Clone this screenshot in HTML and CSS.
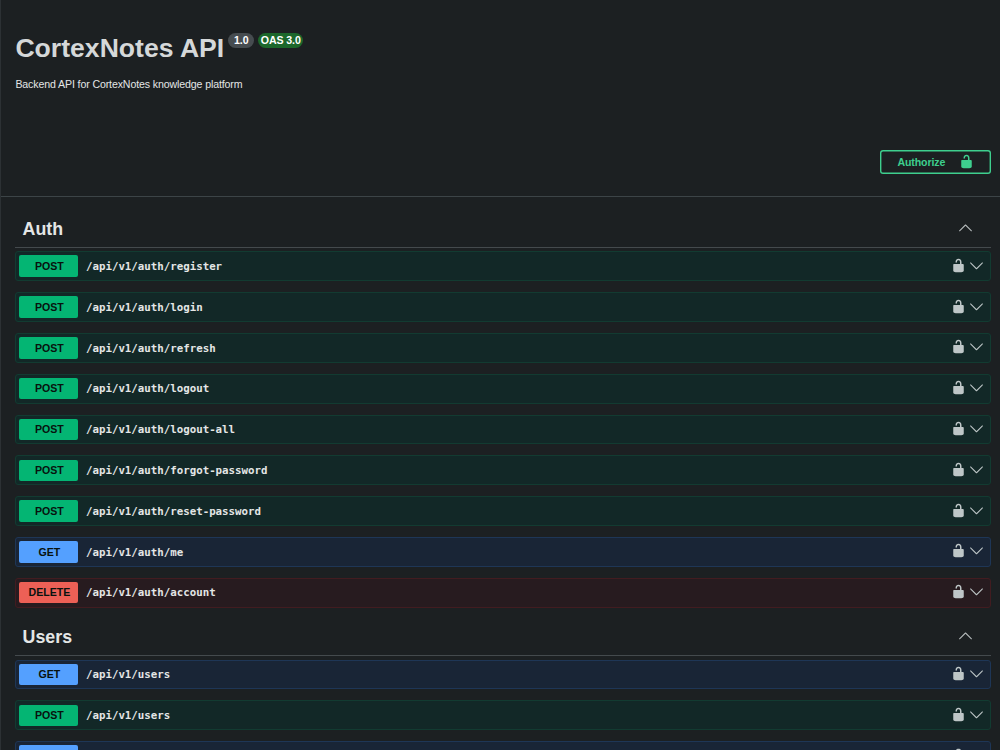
FILE: index.html
```html
<!DOCTYPE html>
<html lang="en">
  <head>
    <meta charset="UTF-8" />
    <meta name="viewport" content="width=device-width, initial-scale=1.0" />
    <title>CortexNotes API</title>
    <link rel="stylesheet" href="styles.css">
  </head>
  <body>
    <svg class="sprite" aria-hidden="true">
      <symbol id="unlocked" viewBox="0 0 20 20">
        <path d="M15.8 8H14V5.6C14 2.703 12.665 1 10 1 7.334 1 6 2.703 6 5.6V6h2v-.801C8 3.754 8.797 3 10 3c1.203 0 2 .754 2 2.199V8H4c-.553 0-1 .646-1 1.199V17c0 .549.428 1.139.951 1.307l1.197.387C5.672 18.861 6.55 19 7.1 19h5.8c.549 0 1.428-.139 1.951-.307l1.196-.387c.524-.167.953-.757.953-1.306V9.199C17 8.646 16.352 8 15.8 8z" />
      </symbol>
      <symbol id="arrow-down" viewBox="0 0 20 20">
        <path d="M17.418 6.109c.272-.268.709-.268.979 0s.271.701 0 .969l-7.908 7.83c-.27.268-.707.268-.979 0l-7.908-7.83c-.27-.268-.27-.701 0-.969s.709-.268.979 0L10 13.25z" />
      </symbol>
      <symbol id="arrow-up" viewBox="0 0 20 20">
        <path d="M17.418 14.908c.272.268.709.268.979 0s.271-.701 0-.969l-7.908-7.83c-.27-.268-.707-.268-.979 0l-7.908 7.83c-.27.268-.27.701 0 .969s.709.268.979 0L10 7.767z" />
      </symbol>
    </svg>

    <main class="page">
      <header class="info">
        <div class="title-row">
          <h1>CortexNotes API</h1>
          <span class="version">1.0</span>
          <span class="version oas">OAS 3.0</span>
        </div>
        <p class="description">Backend API for CortexNotes knowledge platform</p>
      </header>

      <div class="scheme">
        <button type="button" class="authorize">
          <span>Authorize</span>
          <svg class="icon"><use href="#unlocked" /></svg>
        </button>
      </div>

      <div id="operations" class="operations"></div>
    </main>

    <script src="script.js"></script>
  </body>
</html>
```

FILE: styles.css
```css
* {
  box-sizing: border-box;
}
body {
  margin: 0;
  height: 750px;
  overflow: hidden;
  background-color: #1c2022;
  color: #e4e6e6;
  font-family: "Liberation Sans", Arial, sans-serif;
}
.sprite {
  display: none;
}
.page {
  border-left: 1px solid #2c3134;
}
h1,
h2,
p {
  margin: 0;
}
.info {
  height: 149.5px;
  padding: 32px 14.4px 0;
}
.title-row {
  display: flex;
  align-items: flex-start;
}
h1 {
  font-size: 26.6px;
  line-height: 32px;
  color: #d5d8d9;
}
.version {
  width: 26px;
  height: 15px;
  margin: 1px 0 0 4px;
  border-radius: 8px;
  background-color: #464c50;
  color: #fff;
  font-size: 10.6px;
  font-weight: bold;
  line-height: 15px;
  text-align: center;
}
.version.oas {
  width: 45px;
  background-color: #1c672b;
  letter-spacing: -0.1px;
}
.description {
  margin-top: 13px;
  font-size: 10.6px;
  letter-spacing: -0.12px;
  line-height: 14px;
}
.scheme {
  display: flex;
  justify-content: flex-end;
  height: 47.5px;
  padding-right: 9.5px;
  border-bottom: 1px solid #3c4447;
}
.authorize {
  display: flex;
  align-items: center;
  justify-content: space-between;
  width: 110.5px;
  height: 24.5px;
  padding: 0 16.2px 0 17.4px;
  border: none;
  border-radius: 3px;
  background: transparent;
  box-shadow: inset 0 0 0 1.4px #3ecf8e;
  color: #3ecf8e;
  font-family: inherit;
  font-size: 10.6px;
  font-weight: bold;
  letter-spacing: -0.1px;
}
.icon {
  display: block;
  width: 15px;
  height: 15px;
  fill: currentColor;
}
.operations {
  padding: 13.5px 9px 0 14px;
}
.tag {
  display: flex;
  align-items: center;
  justify-content: space-between;
  height: 37.3px;
  margin-bottom: 3.6px;
  padding: 0 18px 0 7.6px;
  border-bottom: 1px solid #444a4d;
}
.tag h2 {
  font-size: 17.8px;
  line-height: 24px;
}
.tag .icon {
  margin-top: -2px;
  color: #b9bebf;
}
.operation {
  display: flex;
  align-items: center;
  height: 29.7px;
  margin-bottom: 11.13px;
  padding: 0 6px 0 3.4px;
  border: 1px solid #123b31;
  border-radius: 3px;
  background-color: #122827;
}
.method {
  width: 59px;
  height: 21.5px;
  padding: 0.5px 0 0 1px;
  border-radius: 2px;
  background-color: #04b573;
  color: #08120e;
  font-size: 10.6px;
  font-weight: bold;
  line-height: 21.5px;
  text-align: center;
}
.path {
  flex: 1;
  margin-left: 7.6px;
  padding-top: 0.5px;
  font-family: "DejaVu Sans Mono", monospace;
  font-size: 10.77px;
  font-weight: bold;
}
.operation .icon {
  margin: -2px 0 0 3px;
  color: #bec6c7;
}
.operation.get {
  border-color: #1e3656;
  background-color: #192536;
}
.get .method {
  background-color: #54a0ff;
}
.operation.delete {
  border-color: #421c20;
  background-color: #271b1f;
}
.delete .method {
  background-color: #ed6056;
}
```

FILE: script.js
```js
const tags = [
  {
    name: "Auth",
    operations: [
      ["post", "/api/v1/auth/register"],
      ["post", "/api/v1/auth/login"],
      ["post", "/api/v1/auth/refresh"],
      ["post", "/api/v1/auth/logout"],
      ["post", "/api/v1/auth/logout-all"],
      ["post", "/api/v1/auth/forgot-password"],
      ["post", "/api/v1/auth/reset-password"],
      ["get", "/api/v1/auth/me"],
      ["delete", "/api/v1/auth/account"],
    ],
  },
  {
    name: "Users",
    operations: [
      ["get", "/api/v1/users"],
      ["post", "/api/v1/users"],
      ["get", ""],
    ],
  },
];

function icon(name) {
  return `<svg class="icon"><use href="#${name}" /></svg>`;
}

function renderOperation([method, path]) {
  return `
    <div class="operation ${method}">
      <span class="method">${path ? method.toUpperCase() : ""}</span>
      <span class="path">${path}</span>
      ${icon("unlocked")}
      ${icon("arrow-down")}
    </div>`;
}

document.getElementById("operations").innerHTML = tags
  .map(
    (tag) => `
    <section>
      <div class="tag"><h2>${tag.name}</h2>${icon("arrow-up")}</div>
      ${tag.operations.map(renderOperation).join("")}
    </section>`
  )
  .join("");
```
